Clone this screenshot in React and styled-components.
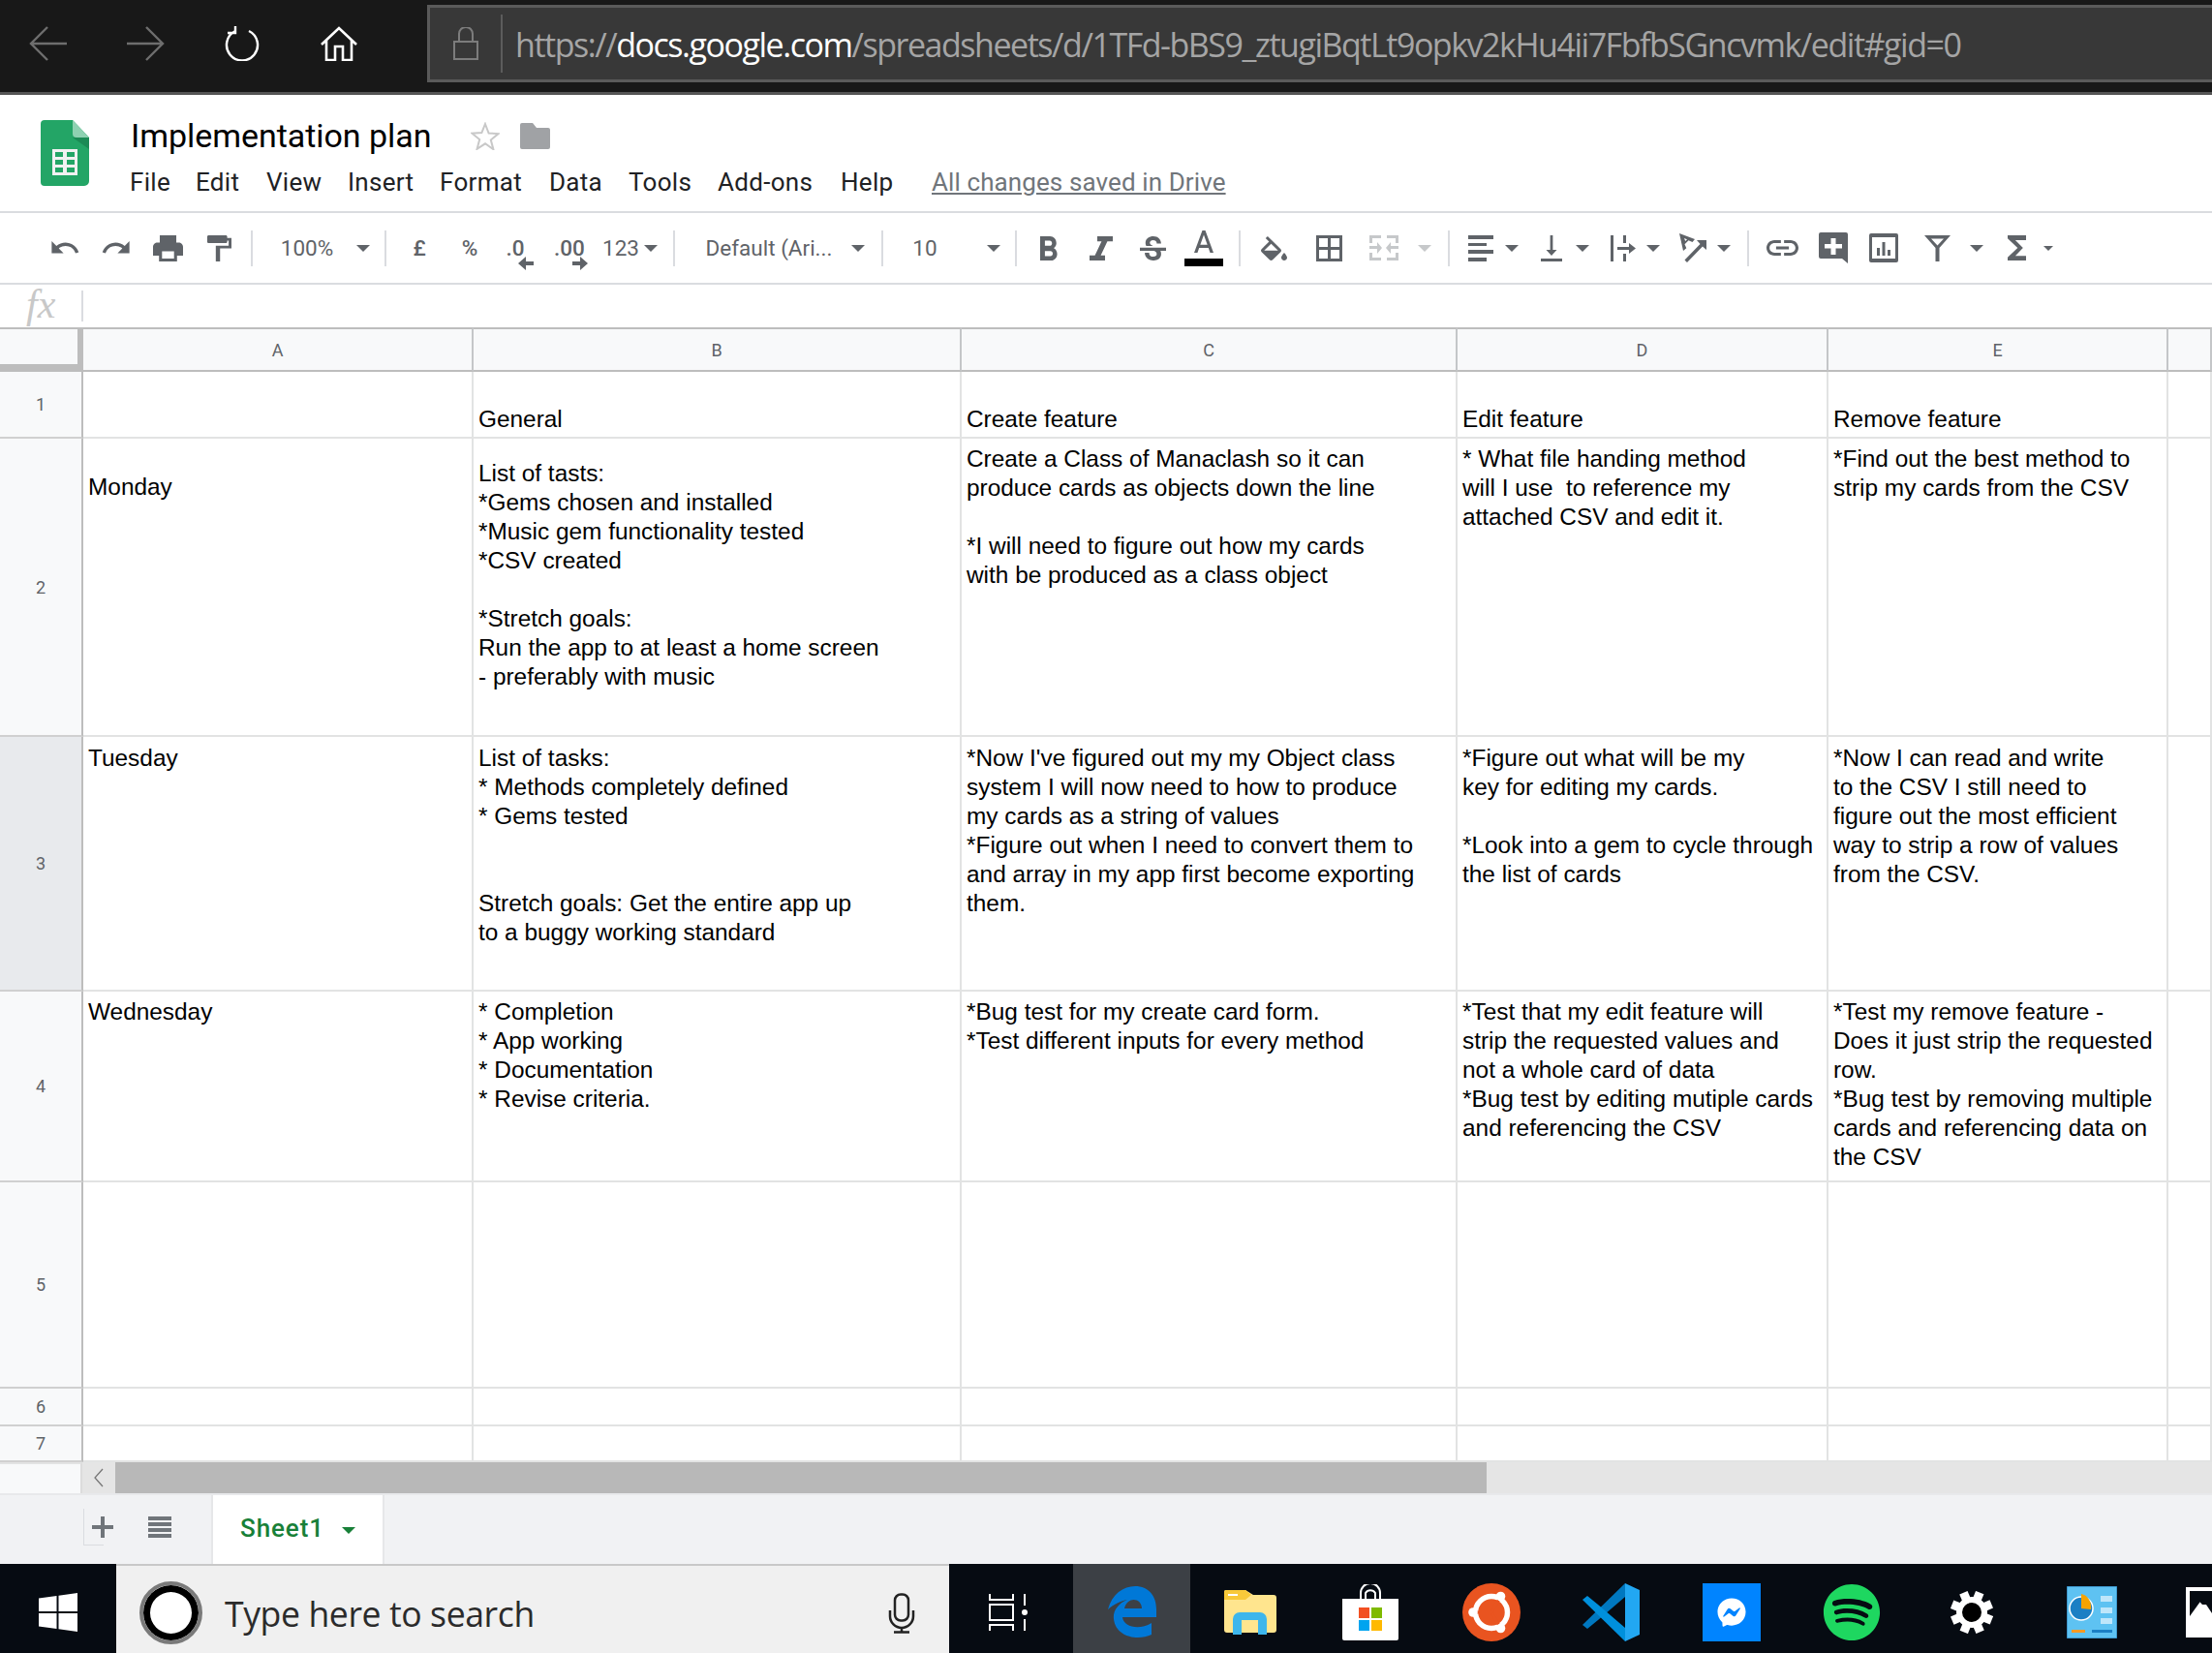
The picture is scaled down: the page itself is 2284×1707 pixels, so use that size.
import React from "react";
import styled, { createGlobalStyle } from "styled-components";
import { FaSpotify, FaFacebookMessenger } from "react-icons/fa";

const GREY = "#5f6368";

const Global = createGlobalStyle`
  html, body { margin: 0; padding: 0; background: #fff; overflow: hidden; }
  * { box-sizing: border-box; }
  #root { width: 2284px; height: 1707px; overflow: hidden; }
`;

const Page = styled.div`
  width: 2284px;
  height: 1707px;
  display: flex;
  flex-direction: column;
  font-family: Roboto, "Liberation Sans", sans-serif;
`;

// BROWSER BAR
const BrowserBar = styled.div`
  height: 98px;
  flex: none;
  display: flex;
  align-items: flex-start;
  background: #181818;
  border-bottom: 3px solid #555;
  padding-top: 5px;
`;
const NavSlot = styled.div`
  width: ${(p) => p.$w}px;
  height: 79px;
  display: flex;
  align-items: center;
  justify-content: center;
  flex: none;
`;
const UrlBox = styled.div`
  flex: 1;
  height: 80px;
  display: flex;
  align-items: center;
  background: #383838;
  border: 3px solid #5a5a5a;
  border-right: none;
`;
const LockSlot = styled.div`
  width: 75px;
  height: 60px;
  display: flex;
  align-items: center;
  justify-content: center;
  border-right: 2px solid #5c5c5c;
  flex: none;
`;
const UrlText = styled.div`
  margin: 2px 0 0 13px;
  font-family: "Open Sans", sans-serif;
  font-size: 34px;
  letter-spacing: -1.47px;
  color: #a5a5a5;
  white-space: nowrap;
  b { font-weight: 400; color: #fff; }
`;

// TITLE AREA
const TitleBar = styled.div`
  height: 122px;
  flex: none;
  display: flex;
  padding: 26px 0 0 42px;
  background: #fff;
  border-bottom: 2px solid #dadce0;
`;
const TitleColumn = styled.div`
  margin-left: 43px;
  display: flex;
  flex-direction: column;
`;
const TitleRow = styled.div`
  display: flex;
  align-items: center;
  height: 32px;
`;
const DocName = styled.div`
  font-size: 34px;
  letter-spacing: -0.05px;
  color: #000;
  width: 351px;
  white-space: nowrap;
`;
const Menu = styled.div`
  display: flex;
  align-items: center;
  margin: 17px 0 0 -1px;
  font-size: 26px;
  color: #202124;
`;
const MenuItem = styled.span`
  width: ${(p) => p.$w}px;
  white-space: nowrap;
  letter-spacing: 0.3px;
`;
const SavedNote = styled.span`
  color: #70757a;
  text-decoration: underline;
  letter-spacing: 0.1px;
  white-space: nowrap;
`;

// TOOLBAR
const Toolbar = styled.div`
  height: 74px;
  flex: none;
  display: flex;
  align-items: center;
  padding-left: 40px;
  border-bottom: 2px solid #dadce0;
  font-size: 22.5px;
  color: ${GREY};
`;
const Slot = styled.div`
  width: ${(p) => p.$w}px;
  margin-left: ${(p) => p.$ml || 0}px;
  height: 40px;
  flex: none;
  display: flex;
  flex-direction: column;
  align-items: center;
  justify-content: center;
  white-space: nowrap;
  font-weight: ${(p) => (p.$bold ? 500 : 400)};
`;
const Divider = styled.div`
  width: ${(p) => p.$w}px;
  height: 37px;
  flex: none;
  display: flex;
  justify-content: center;
  &::before { content: ""; width: 2px; background: #dadce0; }
`;
const Caret = styled.div`
  width: 0;
  height: 0;
  border-left: ${(p) => p.$s || 7}px solid transparent;
  border-right: ${(p) => p.$s || 7}px solid transparent;
  border-top: ${(p) => p.$s || 7}px solid ${(p) => p.$color || GREY};
`;
const ColorBar = styled.div`
  width: 40px;
  height: 8px;
  background: #000;
  margin-top: 6px;
`;
const Glyph = styled.svg`
  display: block;
  flex: none;
`;
const DecimalNum = styled.span`
  line-height: 26px;
  font-weight: 500;
  margin-top: 10px;
`;
const DecimalArrow = styled.div`
  margin: -4px 0 0 22px;
`;

// FORMULA BAR
const FormulaBar = styled.div`
  height: 44px;
  flex: none;
  display: flex;
  align-items: center;
`;
const FxBox = styled.div`
  width: 86px;
  height: 32px;
  border-right: 2px solid #dadce0;
  display: flex;
  align-items: center;
  padding: 0 0 5px 27px;
  font-family: "Liberation Serif", serif;
  font-style: italic;
  font-size: 42px;
  color: #c8c8c8;
`;

// GRID
const Grid = styled.div`
  display: grid;
  grid-template-columns: 86px 403px 504px 512px 383px 351px 1fr;
  grid-template-rows: 46px 69px 308px 263px 197px 213px 39px 37px;
  flex: none;
`;
const Corner = styled.div`
  background: #f8f9fa;
  border-top: 2px solid #bdbdbd;
  border-right: 6px solid #bdbdbd;
  border-bottom: 8px solid #bdbdbd;
`;
const ColHead = styled.div`
  background: #f8f9fa;
  border-top: 2px solid #bdbdbd;
  border-bottom: 2px solid #bdbdbd;
  border-right: 2px solid #c4c6c8;
  display: flex;
  align-items: center;
  justify-content: center;
  font-size: 18px;
  color: ${GREY};
`;
const RowHead = styled.div`
  background: ${(p) => (p.$active ? "#e8eaed" : "#f8f9fa")};
  border-right: 2px solid #bdbdbd;
  border-bottom: 2px solid #d0d0d0;
  display: flex;
  align-items: center;
  justify-content: center;
  font-size: 18px;
  color: ${GREY};
`;
const Cell = styled.div`
  border-right: 2px solid #e2e3e3;
  border-bottom: 2px solid #e2e3e3;
  padding: ${(p) => p.$top || 0}px 0 0 5px;
  display: flex;
  align-items: ${(p) => (p.$bottom ? "flex-end" : "flex-start")};
  font-family: "Liberation Sans", Arial, sans-serif;
  font-size: 24.4px;
  line-height: 30px;
  color: #000;
  white-space: pre;
  overflow: hidden;
  padding-bottom: ${(p) => (p.$bottom ? 3 : 0)}px;
`;

// SCROLLBAR
const ScrollRow = styled.div`
  height: 32px;
  flex: none;
  display: flex;
  background: #e5e5e5;
`;
const ScrollGap = styled.div`
  width: 85px;
  background: #f8f9fa;
  border-top: 2px solid #e2e3e3;
  border-right: 2px solid #dcdcdc;
`;
const ScrollBtn = styled.div`
  width: 34px;
  display: flex;
  align-items: center;
  justify-content: center;
`;
const ScrollThumb = styled.div`
  width: 1416px;
  background: #b8b8b8;
`;

// SHEET TABS
const TabBar = styled.div`
  height: 73px;
  flex: none;
  display: flex;
  background: #f1f2f4;
  border-top: 2px solid #e8e9eb;
`;
const TabTools = styled.div`
  width: 218px;
  display: flex;
  align-items: flex-start;
  padding: 14px 0 0 86px;
  gap: 46px;
`;
const AddBox = styled.div`
  width: 21px;
  height: 38px;
  flex: none;
  display: flex;
  align-items: center;
  padding-left: 8px;
  border-left: 1px solid #dadce0;
  border-bottom: 1px solid #dadce0;
`;
const ListBox = styled.div`
  height: 38px;
  display: flex;
  align-items: center;
`;
const Tab = styled.div`
  width: 179px;
  background: #fff;
  border-left: 2px solid #e6e7e9;
  border-right: 2px solid #e6e7e9;
  display: flex;
  align-items: flex-start;
  padding: 19px 0 0 28px;
  gap: 18px;
  color: #188038;
  font-size: 26px;
  font-weight: 500;
  letter-spacing: 0.9px;
`;
const TabCaret = styled(Caret)`
  margin-top: 14px;
`;

// TASKBAR
const Taskbar = styled.div`
  height: 92px;
  flex: none;
  display: flex;
  background: #060b12;
`;
const TaskSlot = styled.div`
  width: ${(p) => p.$w}px;
  flex: none;
  display: flex;
  align-items: center;
  justify-content: ${(p) => (p.$start ? "flex-start" : "center")};
  background: ${(p) => (p.$active ? "#3c4045" : "transparent")};
  padding: 8px ${(p) => p.$pr || 0}px 0 ${(p) => (p.$start ? 35 : 0)}px;
  overflow: hidden;
`;
const SearchBox = styled.div`
  width: 860px;
  flex: none;
  display: flex;
  align-items: center;
  padding: 7px 35px 0 24px;
  background: #f0f0f0;
  border-top: 2px solid #c8c8c8;
`;
const Cortana = styled.div`
  width: 65px;
  height: 65px;
  border-radius: 50%;
  background: #fff;
  border: 4px solid #7a7a7a;
  box-shadow: inset 0 0 0 7px #000;
  flex: none;
`;
const SearchText = styled.div`
  flex: 1;
  margin-left: 23px;
  font-family: "Open Sans", sans-serif;
  font-size: 35.6px;
  letter-spacing: -0.4px;
  color: #2b2b2b;
  white-space: nowrap;
`;
const BlueSquare = styled.div`
  width: 60px;
  height: 60px;
  background: #0084ff;
  display: flex;
  align-items: center;
  justify-content: center;
`;

const Icon = ({ w, h, box, d, fill = GREY }) => (
  <Glyph width={w} height={h} viewBox={box} preserveAspectRatio="none">
    <path d={d} fill={fill} fillRule="evenodd" />
  </Glyph>
);

const SheetsLogo = () => (
  <Glyph width="50" height="68" viewBox="0 0 50 68">
    <path d="M4 0h29l17 18v45a5 5 0 0 1-5 5H4a4 4 0 0 1-4-4V4a4 4 0 0 1 4-4z" fill="#23a566" />
    <path d="M33 0l17 18H37a4 4 0 0 1-4-4z" fill="#8ed1b1" />
    <path d="M33 18l17 12V18z" fill="#1b8a55" />
    <path d="M12 30h26v27H12zm3 3v5h8v-5zm12 0v5h8v-5zm-12 8v5h8v-5zm12 0v5h8v-5zm-12 8v5h8v-5zm12 0v5h8v-5z" fill="#f1f1f1" fillRule="evenodd" />
  </Glyph>
);

const Arrow = ({ right }) => (
  <DecimalArrow>
    <Glyph width="16" height="14" viewBox="0 0 16 14">
      <path d={right ? "M8 0l8 7-8 7v-5H0V5h8z" : "M8 0L0 7l8 7V9h8V5H8z"} fill={GREY} />
    </Glyph>
  </DecimalArrow>
);

const MergeIcon = () => (
  <Glyph width="30" height="26" viewBox="0 0 30 26">
    <path d="M0 0h12v3H3v5H0zM18 0h12v8h-3V3h-9zM0 18h3v5h9v3H0zM27 18h3v8H18v-3h9zM0 11h8V7l5 6-5 6v-5H0zM30 11h-8V7l-5 6 5 6v-5h8z" fill="#c6c8ca" />
  </Glyph>
);

const AlignIcon = () => (
  <Glyph width="26" height="27" viewBox="0 0 26 27">
    <path d="M0 0h26v4H0zM0 8h19v3H0zM0 15h26v4H0zM0 23h19v4H0z" fill={GREY} />
  </Glyph>
);

const WrapIcon = () => (
  <Glyph width="26" height="27" viewBox="0 0 26 27">
    <path d="M0 0h3v27H0zM13 0h3v8h-3zM13 19h3v8h-3zM7 12h12V8l7 5.500-7 5.500v-4H7z" fill={GREY} />
  </Glyph>
);

const RotateIcon = () => (
  <Glyph width="29" height="30" viewBox="0 0 29 30">
    <path d="M28 7l0 10-4-3.500L8 30l-2.500-2.500L21.500 11 18 7z" fill={GREY} />
    <path d="M0 0l16 6-2.500 3-4-1.800-4 4 1.800 4L4 18zM5 5l1.200 3 1.800-1.800z" fill={GREY} fillRule="evenodd" />
  </Glyph>
);

const CommentIcon = () => (
  <Glyph width="30" height="32" viewBox="0 0 30 32">
    <path d="M2 0h26a2 2 0 0 1 2 2v30l-6-5H2a2 2 0 0 1-2-2V2a2 2 0 0 1 2-2z" fill={GREY} />
    <path d="M12.500 6h5v6H24v4.500h-6.500V23h-5v-6.500H6V12h6.500z" fill="#fff" />
  </Glyph>
);

const ChartIcon = () => (
  <Glyph width="30" height="30" viewBox="0 0 30 30">
    <path d="M2 0h26a2 2 0 0 1 2 2v26a2 2 0 0 1-2 2H2a2 2 0 0 1-2-2V2a2 2 0 0 1 2-2zm1 4v22h24V4z" fill={GREY} fillRule="evenodd" />
    <path d="M8 15h3v8H8zM13.500 9h3v14h-3zM19 17h3v6h-3z" fill={GREY} />
  </Glyph>
);

const FilterIcon = () => (
  <Glyph width="27" height="27" viewBox="0 0 27 27">
    <path d="M0 0h27L15.500 13v14h-4V13zM7 3.500l6.500 7 6.500-7z" fill={GREY} fillRule="evenodd" />
  </Glyph>
);

const BackArrow = ({ right }) => (
  <Glyph width="40" height="36" viewBox="0 0 40 36" style={right ? { transform: "scaleX(-1)" } : undefined}>
    <path d="M39 18H3M19 1L2 18l17 17" fill="none" stroke="#6e6e6e" strokeWidth="2.400" />
  </Glyph>
);

const WindowsLogo = () => (
  <Glyph width="40" height="40" viewBox="0 0 40 40">
    <path d="M0 5.500L18.500 3v16H0zM20.500 2.700L40 0v19H20.500zM0 21h18.500v16L0 34.500zM20.500 21H40v19l-19.500-2.700z" fill="#fff" />
  </Glyph>
);

const MicIcon = () => (
  <Glyph width="28" height="42" viewBox="0 0 28 42">
    <rect x="7" y="1.500" width="14" height="27" rx="6" fill="none" stroke="#222" strokeWidth="2.500" />
    <path d="M2 18v6a12 12 0 0 0 24 0v-6M14 36v5M6 40.500h16" fill="none" stroke="#222" strokeWidth="2.500" />
  </Glyph>
);

const TaskViewIcon = () => (
  <Glyph width="40" height="38" viewBox="0 0 40 38">
    <path d="M1 0v6h24V0M1 38v-6h24v6M1 11h24v16H1z" fill="none" stroke="#fff" strokeWidth="2" />
    <path d="M37 0v12M37 26v12" stroke="#fff" strokeWidth="2" />
    <circle cx="37" cy="19" r="3" fill="#fff" />
  </Glyph>
);

const EdgeIcon = () => (
  <Glyph width="50" height="54" viewBox="0 0 50 54">
    <path
      d="M0 24C4 8 16 0 28 0c14 0 22 10 22 24v8H15c1 10 17 14 30 6v12C30 57 8 52 6 34 5 26 10 18 20 14 14 15 5 19 0 24zM17 23h18c0-11-15-13-18 0z"
      fill="#0078d7"
      fillRule="evenodd"
    />
  </Glyph>
);

const FolderIcon = () => (
  <Glyph width="54" height="46" viewBox="0 0 54 46">
    <path d="M2 0h20l8 5h21a3 3 0 0 1 3 3v33a3 3 0 0 1-3 3H3a3 3 0 0 1-3-3V2a2 2 0 0 1 2-2z" fill="#ffe58e" />
    <path d="M2 0h20l6 5-6 5H0V2a2 2 0 0 1 2-2z" fill="#f8c93a" />
    <path d="M4 4h10v2H4z" fill="#fff" />
    <path d="M9 46V30a7 7 0 0 1 7-7h21a7 7 0 0 1 7 7v16h-9V31H18v15z" fill="#3db6ec" />
  </Glyph>
);

const StoreIcon = () => (
  <Glyph width="58" height="58" viewBox="0 0 58 58">
    <path d="M19 15V9a9 9 0 0 1 20 0v6M24 15V9a6 6 0 0 1 10 0v6" fill="none" stroke="#fff" strokeWidth="2" />
    <path d="M0 15h58v41a2 2 0 0 1-2 2H2a2 2 0 0 1-2-2z" fill="#fff" />
    <path d="M17 24h11v11H17z" fill="#f25022" />
    <path d="M30 24h11v11H30z" fill="#7fba00" />
    <path d="M17 37h11v11H17z" fill="#00a4ef" />
    <path d="M30 37h11v11H30z" fill="#ffb900" />
  </Glyph>
);

const UbuntuIcon = () => (
  <Glyph width="60" height="60" viewBox="0 0 60 60">
    <circle cx="30" cy="30" r="30" fill="#e95420" />
    <circle cx="30" cy="30" r="16.500" fill="none" stroke="#fff" strokeWidth="5.500" />
    <path d="M30 30L8 30M30 30L41 11M30 30L41 49" stroke="#e95420" strokeWidth="3" />
    <circle cx="11" cy="30" r="4.800" fill="#fff" />
    <circle cx="39.500" cy="13.500" r="4.800" fill="#fff" />
    <circle cx="39.500" cy="46.500" r="4.800" fill="#fff" />
  </Glyph>
);

const CodeIcon = () => (
  <Glyph width="60" height="60" viewBox="0 0 60 60">
    <path d="M44 0l15 7v46l-15 7z" fill="#22a7f2" />
    <path d="M44 0v14L16 38 5 47 0 43z" fill="#0078c0" />
    <path d="M44 60V46L16 22 5 13 0 17z" fill="#0090dc" />
  </Glyph>
);

const GearIcon = () => (
  <Glyph width="44" height="44" viewBox="0 0 44 44">
    <g fill="#fff">
      {[0, 45, 90, 135, 180, 225, 270, 315].map((a) => (
        <rect key={a} x="17.500" y="0" width="9" height="10" transform={`rotate(${a + 22} 22 22)`} />
      ))}
    </g>
    <circle cx="22" cy="22" r="13" fill="#000" stroke="#fff" strokeWidth="6" />
  </Glyph>
);

const PanelIcon = () => (
  <Glyph width="52" height="54" viewBox="0 0 52 54">
    <rect width="52" height="54" fill="#5ec2f2" stroke="#1d6fa8" />
    <circle cx="15" cy="23" r="12" fill="#1b7fc4" stroke="#fff" strokeWidth="1.500" />
    <path d="M15 23V8a12 14 0 0 1 10 16z" fill="#f5a300" />
    <path d="M35 10h12v6H35zM35 22h12v6H35zM35 33h12v6H35z" fill="#bfe6fa" />
    <path d="M5 45h14v3H5z" fill="#f59a23" />
    <path d="M26 45h21v3H26z" fill="#1b7fc4" />
  </Glyph>
);

const LastIcon = () => (
  <Glyph width="62" height="52" viewBox="0 0 62 52">
    <path d="M0 0h62v52H0z" fill="#fff" />
    <path d="M4 4h58v14L17 18z" fill="#060b12" />
    <path d="M4 4v26L17 12l12 18V4z" fill="#060b12" />
  </Glyph>
);

const columns = ["A", "B", "C", "D", "E"];

const rows = [
  {
    n: 1, bottom: true,
    cells: [
      { t: "" },
      { t: "General" },
      { t: "Create feature" },
      { t: "Edit feature" },
      { t: "Remove feature" },
    ],
  },
  {
    n: 2,
    cells: [
      { top: 35, t: "Monday" },
      { top: 21, t: "List of tasts:\n*Gems chosen and installed\n*Music gem functionality tested\n*CSV created\n\n*Stretch goals:\nRun the app to at least a home screen\n- preferably with music" },
      { top: 6, t: "Create a Class of Manaclash so it can\nproduce cards as objects down the line\n\n*I will need to figure out how my cards\nwith be produced as a class object" },
      { top: 6, t: "* What file handing method\nwill I use  to reference my\nattached CSV and edit it." },
      { top: 6, t: "*Find out the best method to\nstrip my cards from the CSV" },
    ],
  },
  {
    n: 3, active: true,
    cells: [
      { top: 7, t: "Tuesday" },
      { top: 7, t: "List of tasks:\n* Methods completely defined\n* Gems tested\n\n\nStretch goals: Get the entire app up\nto a buggy working standard" },
      { top: 7, t: "*Now I've figured out my my Object class\nsystem I will now need to how to produce\nmy cards as a string of values\n*Figure out when I need to convert them to\nand array in my app first become exporting\nthem." },
      { top: 7, t: "*Figure out what will be my\nkey for editing my cards.\n\n*Look into a gem to cycle through\nthe list of cards" },
      { top: 7, t: "*Now I can read and write\nto the CSV I still need to\nfigure out the most efficient\nway to strip a row of values\nfrom the CSV." },
    ],
  },
  {
    n: 4,
    cells: [
      { top: 6, t: "Wednesday" },
      { top: 6, t: "* Completion\n* App working\n* Documentation\n* Revise criteria." },
      { top: 6, t: "*Bug test for my create card form.\n*Test different inputs for every method" },
      { top: 6, t: "*Test that my edit feature will\nstrip the requested values and\nnot a whole card of data\n*Bug test by editing mutiple cards\nand referencing the CSV" },
      { top: 6, t: "*Test my remove feature -\nDoes it just strip the requested\nrow.\n*Bug test by removing multiple\ncards and referencing data on\nthe CSV" },
    ],
  },
  { n: 5, cells: [] },
  { n: 6, cells: [] },
  { n: 7, cells: [] },
];

const App = () => {
  return (
    <Page>
      <Global />
      <BrowserBar>
        <NavSlot $w={100}><BackArrow /></NavSlot>
        <NavSlot $w={100}><BackArrow right /></NavSlot>
        <NavSlot $w={100}>
          <Glyph width="38" height="36" viewBox="0 0 38 36">
            <path d="M12 5a16 16 0 1 0 14 0M12 0v7H4" fill="none" stroke="#fff" strokeWidth="2.400" />
          </Glyph>
        </NavSlot>
        <NavSlot $w={100}>
          <Glyph width="38" height="36" viewBox="0 0 38 36">
            <path d="M1 19L19 2l18 17M6 15v20h9V21h8v14h9V15" fill="none" stroke="#fff" strokeWidth="2.600" />
          </Glyph>
        </NavSlot>
        <NavSlot $w={41} />
        <UrlBox>
          <LockSlot>
            <Glyph width="26" height="34" viewBox="0 0 26 34">
              <path d="M1 15h24v18H1zM6 15V7a7 7 0 0 1 14 0v8" fill="none" stroke="#7c7c7c" strokeWidth="2" />
            </Glyph>
          </LockSlot>
          <UrlText>https://<b>docs.google.com</b>/spreadsheets/d/1TFd-bBS9_ztugiBqtLt9opkv2kHu4ii7FbfbSGncvmk/edit#gid=0</UrlText>
        </UrlBox>
      </BrowserBar>

      <TitleBar>
        <SheetsLogo />
        <TitleColumn>
          <TitleRow>
            <DocName>Implementation plan</DocName>
            <Glyph width="30" height="29" viewBox="0 0 30 29">
              <path d="M15 2l3.600 9.500 10 .6-7.800 6.400 2.600 9.700L15 22.300 6.600 27.800l2.600-9.700L1.400 11.700l10-.6z" fill="none" stroke="#c8c8c8" strokeWidth="2" />
            </Glyph>
            <Glyph width="31" height="27" viewBox="0 0 31 27" style={{ marginLeft: 21 }}>
              <path d="M2 0h11l4 5h12a2 2 0 0 1 2 2v18a2 2 0 0 1-2 2H2a2 2 0 0 1-2-2V2a2 2 0 0 1 2-2z" fill="#a0a2a5" />
            </Glyph>
          </TitleRow>
          <Menu>
            <MenuItem $w={68}>File</MenuItem>
            <MenuItem $w={73}>Edit</MenuItem>
            <MenuItem $w={84}>View</MenuItem>
            <MenuItem $w={95}>Insert</MenuItem>
            <MenuItem $w={113}>Format</MenuItem>
            <MenuItem $w={82}>Data</MenuItem>
            <MenuItem $w={92}>Tools</MenuItem>
            <MenuItem $w={127}>Add-ons</MenuItem>
            <MenuItem $w={94}>Help</MenuItem>
            <SavedNote>All changes saved in Drive</SavedNote>
          </Menu>
        </TitleColumn>
      </TitleBar>

      <Toolbar>
        <Slot $w={54}><Icon w={30} h={14} box="1 7 22 10" d="M12.500 8c-2.650 0-5.050.990-6.900 2.600L2 7v9h9l-3.620-3.620c1.390-1.160 3.160-1.880 5.120-1.880 3.540 0 6.550 2.310 7.600 5.500l2.370-.780C21.080 11.030 17.150 8 12.500 8z" /></Slot>
        <Slot $w={52}><Icon w={30} h={14} box="1 7 22 10" d="M18.400 10.600C16.550 8.990 14.150 8 11.500 8c-4.650 0-8.580 3.030-9.960 7.220L3.900 16c1.050-3.190 4.050-5.500 7.600-5.500 1.950 0 3.730.720 5.120 1.880L13 16h9V7l-3.600 3.600z" /></Slot>
        <Slot $w={54}><Icon w={31} h={27} box="2 3 20 18" d="M19 8H5c-1.660 0-3 1.340-3 3v6h4v4h12v-4h4v-6c0-1.660-1.340-3-3-3zm-3 11H8v-5h8v5zm1.500-11H6.500V3h11z" /></Slot>
        <Slot $w={52}><Icon w={25} h={27} box="4 2 17 20" d="M18 4V3c0-.550-.450-1-1-1H5c-.550 0-1 .450-1 1v4c0 .550.450 1 1 1h12c.550 0 1-.450 1-1V6h1v4H10v12h3V12h8V4h-3z" /></Slot>
        <Divider $w={16} />
        <Slot $w={98}>100%</Slot>
        <Slot $w={18}><Caret /></Slot>
        <Divider $w={28} />
        <Slot $w={42} $bold>£</Slot>
        <Slot $w={62} $bold>%</Slot>
        <Slot $w={32}><DecimalNum>.0</DecimalNum><Arrow /></Slot>
        <Slot $w={44} $ml={18}><DecimalNum>.00</DecimalNum><Arrow right /></Slot>
        <Slot $w={50} $ml={6}>123</Slot>
        <Slot $w={12}><Caret /></Slot>
        <Divider $w={36} />
        <Slot $w={160}>Default (Ari...</Slot>
        <Slot $w={24}><Caret /></Slot>
        <Divider $w={26} />
        <Slot $w={62}>10</Slot>
        <Slot $w={32} $ml={24}><Caret /></Slot>
        <Divider $w={14} />
        <Slot $w={54}><Icon w={18} h={25} box="7 4 11 14" d="M15.600 10.790c.970-.670 1.650-1.770 1.650-2.790 0-2.260-1.750-4-4-4H7v14h7.040c2.090 0 3.710-1.700 3.710-3.790 0-1.520-.860-2.820-2.150-3.420zM10 6.500h3c.830 0 1.500.670 1.500 1.500s-.670 1.500-1.500 1.500h-3v-3zm3.500 9H10v-3h3.500c.830 0 1.500.670 1.500 1.500s-.670 1.500-1.500 1.500z" /></Slot>
        <Slot $w={54}><Icon w={24} h={25} box="6 4 12 14" d="M10 4v3h2.210l-3.420 8H6v3h8v-3h-2.210l3.420-8H18V4z" /></Slot>
        <Slot $w={52}><Icon w={27} h={25} box="3 3 18 15" d="M6.850 7.080C6.850 4.370 9.450 3 12.240 3c1.640 0 3 .490 3.900 1.280.770.650 1.460 1.730 1.460 3.240h-3.010c0-.310-.050-.590-.150-.850-.290-.860-1.200-1.280-2.250-1.280-1.860 0-2.340 1.020-2.340 1.700 0 .480.250.880.740 1.210.380.250.770.480 1.410.700H7.390c-.210-.340-.540-.890-.540-1.920zM21 12v-2H3v2h9.620c1.150.450 1.960.750 1.960 1.970 0 1-.810 1.670-2.280 1.670-1.540 0-2.930-.540-2.930-2.510H6.400c0 .550.080 1.130.240 1.580.810 2.290 3.290 3.300 5.670 3.300 2.270 0 5.300-.890 5.300-4.050 0-.300-.010-1.160-.480-1.960H21z" /></Slot>
        <Slot $w={54}>
          <Icon w={20} h={23} box="5.500 3 13 14" d="M11 3L5.500 17h2.250l1.120-3h6.250l1.120 3h2.250L13 3h-2zm-1.380 9L12 5.670 14.380 12H9.620z" />
          <ColorBar />
        </Slot>
        <Divider $w={20} />
        <Slot $w={50}><Icon w={27} h={25} box="3 0 18 17" d="M16.560 8.940L7.620 0 6.210 1.410l2.380 2.380-5.150 5.150c-.590.590-.590 1.540 0 2.120l5.500 5.500c.290.290.680.440 1.060.440s.770-.150 1.060-.440l5.500-5.500c.590-.580.590-1.530 0-2.120zM5.210 10L10 5.210 14.790 10H5.210zM19 11.500s-2 2.170-2 3.500c0 1.100.900 2 2 2s2-.900 2-2c0-1.330-2-3.500-2-3.500z" /></Slot>
        <Slot $w={64}><Icon w={27} h={27} box="3 3 18 18" d="M3 3v18h18V3H3zm8 16H5v-6h6v6zm0-8H5V5h6v6zm8 8h-6v-6h6v6zm0-8h-6V5h6v6z" /></Slot>
        <Slot $w={50}><MergeIcon /></Slot>
        <Slot $w={34}><Caret $color="#c6c8ca" /></Slot>
        <Divider $w={16} />
        <Slot $w={50}><AlignIcon /></Slot>
        <Slot $w={14}><Caret /></Slot>
        <Slot $w={40} $ml={14}><Icon w={22} h={27} box="4 3 16 18" d="M16 13h-3V3h-2v10H8l4 4 4-4zM4 19v2h16v-2H4z" /></Slot>
        <Slot $w={24}><Caret /></Slot>
        <Slot $w={55} $ml={2}><WrapIcon /></Slot>
        <Slot $w={8}><Caret /></Slot>
        <Slot $w={50} $ml={12}><RotateIcon /></Slot>
        <Slot $w={14}><Caret /></Slot>
        <Divider $w={36} />
        <Slot $w={34}><Icon w={33} h={16} box="2 7 20 10" d="M3.900 12c0-1.710 1.390-3.100 3.100-3.100h4V7H7c-2.760 0-5 2.240-5 5s2.240 5 5 5h4v-1.900H7c-1.710 0-3.100-1.390-3.100-3.100zM8 13h8v-2H8v2zm9-6h-4v1.900h4c1.710 0 3.100 1.390 3.100 3.100s-1.390 3.100-3.100 3.100h-4V17h4c2.760 0 5-2.240 5-5s-2.240-5-5-5z" /></Slot>
        <Slot $w={72}><CommentIcon /></Slot>
        <Slot $w={32}><ChartIcon /></Slot>
        <Slot $w={50} $ml={14}><FilterIcon /></Slot>
        <Slot $w={32}><Caret /></Slot>
        <Slot $w={50}><Icon w={19} h={26} box="6 4 12 16" d="M18 4H6v2l6.500 6L6 18v2h12v-3h-7l5-5-5-5h7z" /></Slot>
        <Slot $w={16}><Caret $s={5} /></Slot>
      </Toolbar>

      <FormulaBar>
        <FxBox>fx</FxBox>
      </FormulaBar>

      <Grid>
        <Corner />
        {columns.map((c) => <ColHead key={c}>{c}</ColHead>)}
        <ColHead />
        {rows.map((r) => (
          <React.Fragment key={r.n}>
            <RowHead $active={r.active}>{r.n}</RowHead>
            {columns.map((c, i) => {
              const cell = r.cells[i] || {};
              return <Cell key={c} $top={cell.top} $bottom={r.bottom}>{cell.t}</Cell>;
            })}
            <Cell />
          </React.Fragment>
        ))}
      </Grid>

      <ScrollRow>
        <ScrollGap />
        <ScrollBtn>
          <Glyph width="10" height="20" viewBox="0 0 10 20">
            <path d="M9 1L1 10l8 9" fill="none" stroke="#777" strokeWidth="1.300" />
          </Glyph>
        </ScrollBtn>
        <ScrollThumb />
      </ScrollRow>

      <TabBar>
        <TabTools>
          <AddBox>
            <Glyph width="22" height="22" viewBox="0 0 22 22">
              <path d="M9 0h4v9h9v4h-9v9H9v-9H0V9h9z" fill="#70757a" />
            </Glyph>
          </AddBox>
          <ListBox>
            <Glyph width="24" height="22" viewBox="0 0 24 22">
              <path d="M0 0h24v4H0zM0 6h24v4H0zM0 12h24v4H0zM0 18h24v4H0z" fill="#70757a" />
            </Glyph>
          </ListBox>
        </TabTools>
        <Tab>
          Sheet1
          <TabCaret $color="#188038" />
        </Tab>
      </TabBar>

      <Taskbar>
        <TaskSlot $w={120}><WindowsLogo /></TaskSlot>
        <SearchBox>
          <Cortana />
          <SearchText>Type here to search</SearchText>
          <MicIcon />
        </SearchBox>
        <TaskSlot $w={128} $pr={7}><TaskViewIcon /></TaskSlot>
        <TaskSlot $w={121} $active><EdgeIcon /></TaskSlot>
        <TaskSlot $w={124}><FolderIcon /></TaskSlot>
        <TaskSlot $w={124}><StoreIcon /></TaskSlot>
        <TaskSlot $w={125}><UbuntuIcon /></TaskSlot>
        <TaskSlot $w={124}><CodeIcon /></TaskSlot>
        <TaskSlot $w={124}>
          <BlueSquare><FaFacebookMessenger size={30} color="#fff" /></BlueSquare>
        </TaskSlot>
        <TaskSlot $w={124}><FaSpotify size={60} color="#1ed760" /></TaskSlot>
        <TaskSlot $w={124}><GearIcon /></TaskSlot>
        <TaskSlot $w={124}><PanelIcon /></TaskSlot>
        <TaskSlot $w={62} $start><LastIcon /></TaskSlot>
      </Taskbar>
    </Page>
  );
};

export default App;
